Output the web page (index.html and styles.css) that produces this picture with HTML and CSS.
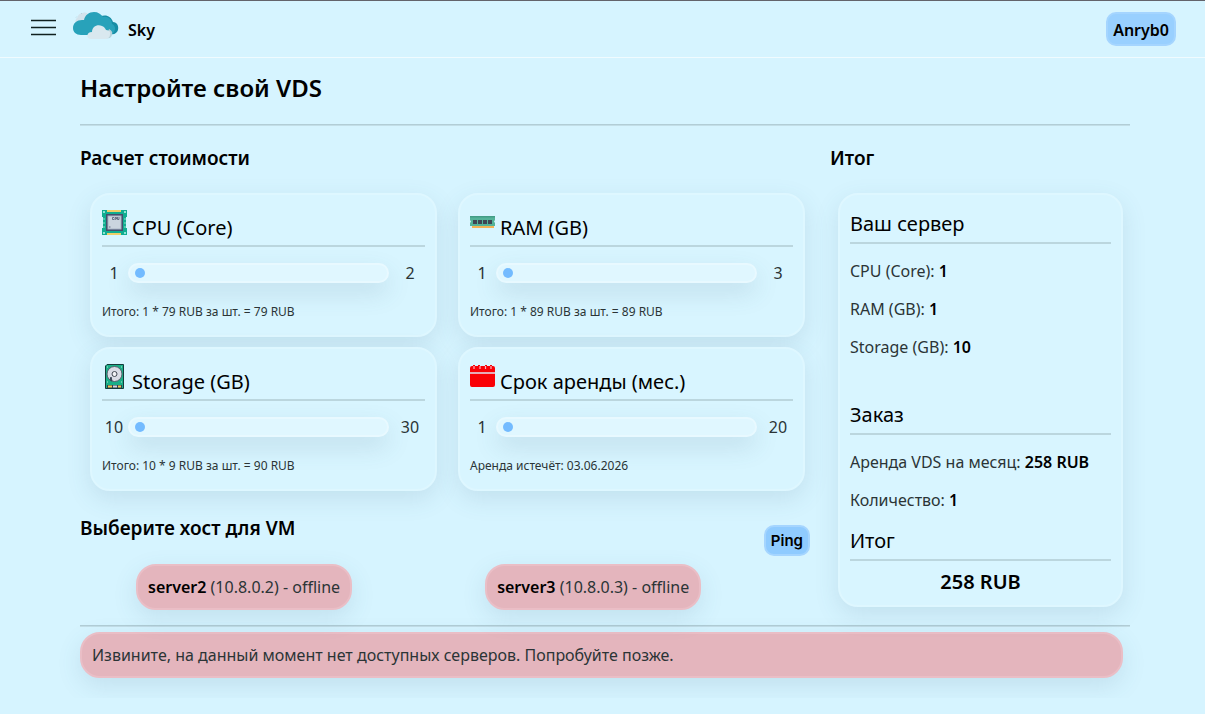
FILE: index.html
```html
<!DOCTYPE html>
<html lang="ru">
<head>
<meta charset="utf-8">
<title>Sky — VDS</title>
<link rel="stylesheet" href="styles.css">
</head>
<body>
<header class="topbar">
  <button class="menu" type="button" aria-label="Меню">
    <svg width="26" height="18" viewBox="0 0 26 18"><path d="M0 1.500h25M0 8.500h25M0 15.500h25" stroke="#10201f" stroke-width="1.3"/></svg>
  </button>
  <a class="brand" href="#">
    <svg width="46" height="28" viewBox="0 0 46 28" aria-hidden="true">
      <path d="M3 16C1 10 3 6 5 5c0-3 3-4 5-4 2-1 5 0 6 2l1 8-8 6z" fill="#d3e3ec"/>
      <path d="M3 5.500l1-1M8 2l1-1" stroke="#b7d5df"/>
      <path d="M27 5c5-3 11-1 13 5 4 0 6 4 5 8-1 3-4 5-7 4l-9-3z" fill="#178da5"/>
      <path d="M8 23c-5 0-8-3-8-7 0-5 4-8 9-8h2c1-5 5-8 10-8 4 0 7 2 9 5 5-1 9 2 9 7 3 1 4 5 2 8-1 2-3 3-5 3z" fill="#28a2ba"/>
      <path d="M33 26c4 1 6-1 6-4 1-2-1-4-3-5z" fill="#b8d0d8"/>
      <path d="M18 27c-5 0-5-7 1-7 0-5 5-8 10-6 3 1 4 4 4 4 4 0 5 3 4 5 0 2-2 4-5 4z" fill="#d9e8ef"/>
    </svg>
    <span>Sky</span>
  </a>
  <button class="btn user" type="button">Anryb0</button>
</header>
<main class="page">
  <h1>Настройте свой VDS</h1>
  <hr class="rule">
  <div class="columns">
    <section class="config">
      <h2>Расчет стоимости</h2>
      <div class="cards">
        <article class="card">
          <div class="card-title">
            <svg width="25" height="25" viewBox="0 0 25 25" aria-hidden="true">
              <path d="M0 0h25v7h-1v11h1v7H0v-7h1V7H0z" fill="#10ad91"/>
              <path d="M5 0h14v2H5zM5 23h14v2H5z" fill="#efcf68"/>
              <path d="M1 8h2v2H1zm0 4h2v2H1zm0 4h2v2H1zm21-8h2v2h-2zm0 4h2v2h-2zm0 4h2v2h-2z" fill="#49c6ac"/>
              <path d="M1 1h2v2H1zm21 0h2v2h-2zM1 22h2v2H1zm21 0h2v2h-2z" fill="#8ee3d1"/>
              <path d="M4 4h17v17H4z" fill="#454f6c"/>
              <path d="M5.500 5.500h14v14h-14z" fill="#a9b5c6"/>
              <path d="M6.500 6.500h12v12h-12z" fill="#cbd5df"/>
              <path d="M12 7.500h-1.500v2H12M13 10V7.500h1.500V9H13M15.500 7v2.500H17V7M7 17h1.500" fill="none" stroke="#4d5870" stroke-width=".8"/>
            </svg>
            <label for="cpu">CPU (Core)</label>
          </div>
          <div class="range-row"><span>1</span><input id="cpu" type="range" min="1" max="2" value="1"><span>2</span></div>
          <p class="note">Итого: 1 * 79 RUB за шт. = 79 RUB</p>
        </article>
        <article class="card">
          <div class="card-title">
            <svg width="25" height="25" viewBox="0 0 25 25" aria-hidden="true">
              <path d="M2 16h22v2H2z" fill="#f5b354"/>
              <path d="M0 6h25v4l-1 1.500 1 1.500v3H0v-3l1-1.500L0 10z" fill="#54b399"/>
              <path d="M0 6h25v1.500H0z" fill="#439d86"/>
              <path d="M3 10h4v4H3zm5 0h4v4H8zm5 0h4v4h-4zm5 0h4v4h-4z" fill="#3d4654"/>
            </svg>
            <label for="ram">RAM (GB)</label>
          </div>
          <div class="range-row"><span>1</span><input id="ram" type="range" min="1" max="3" value="1"><span>3</span></div>
          <p class="note">Итого: 1 * 89 RUB за шт. = 89 RUB</p>
        </article>
        <article class="card">
          <div class="card-title">
            <svg width="25" height="25" viewBox="0 0 25 25" aria-hidden="true">
              <path d="M5 .5h16.500v24h-18V2z" fill="#19ae87" stroke="#123c3b"/>
              <circle cx="12.500" cy="10" r="7.500" fill="#d9dce6" stroke="#53606c"/>
              <circle cx="12.500" cy="10" r="2.500" fill="#f2f3f7" stroke="#424853"/>
              <path d="M9 13l-1 3 2 1z" fill="#394555" stroke="#394555"/>
              <path d="M5 21h15v3H5z" fill="#343d4e"/>
              <path d="M6 21.500h4v2H6zm10 0h3v2h-3z" fill="#f1cf50"/><path d="M11 21.500h4v2h-4z" fill="#cfd8df"/>
              <path d="M5 3h1M19 3h1M5 18h1M19 18h1" stroke="#b6e6d2"/>
            </svg>
            <label for="storage">Storage (GB)</label>
          </div>
          <div class="range-row"><span>10</span><input id="storage" type="range" min="10" max="30" value="10"><span>30</span></div>
          <p class="note">Итого: 10 * 9 RUB за шт. = 90 RUB</p>
        </article>
        <article class="card">
          <div class="card-title">
            <svg width="25" height="25" viewBox="0 0 25 25" aria-hidden="true">
              <path d="M0 8V4q0-2 2-2h1V1h2v1h3V1h2v1h5V1h2v1h3V1h2v1h1q2 0 2 2v4zM0 10h25v11q0 2-2 2H2q-2 0-2-2z" fill="#f90006"/>
              <path d="M0 8h25v2H0z" fill="#e5aab7"/>
              <path d="M4 2v3M10 2v3M15.500 2v3M21 2v3" stroke="#f7b3bd" stroke-width="1.200"/>
            </svg>
            <label for="term">Срок аренды (мес.)</label>
          </div>
          <div class="range-row"><span>1</span><input id="term" type="range" min="1" max="20" value="1"><span>20</span></div>
          <p class="note">Аренда истечёт: 03.06.2026</p>
        </article>
      </div>
      <div class="host-head">
        <h2>Выберите хост для VM</h2>
        <button class="btn ping" type="button">Ping</button>
      </div>
      <div class="hosts">
        <div class="host"><b>server2</b> (10.8.0.2) - offline</div>
        <div class="host"><b>server3</b> (10.8.0.3) - offline</div>
      </div>
    </section>
    <aside class="summary">
      <h2>Итог</h2>
      <div class="total-card">
        <h3>Ваш сервер</h3>
        <p>CPU (Core): <b>1</b></p>
        <p>RAM (GB): <b>1</b></p>
        <p>Storage (GB): <b>10</b></p>
        <h3 class="order">Заказ</h3>
        <p>Аренда VDS на месяц: <b>258 RUB</b></p>
        <p>Количество: <b>1</b></p>
        <h3 class="sum">Итог</h3>
        <strong class="price">258 RUB</strong>
      </div>
    </aside>
  </div>
  <hr class="rule">
  <div class="alert" role="alert">Извините, на данный момент нет доступных серверов. Попробуйте позже.</div>
</main>
</body>
</html>
```
FILE: styles.css
```css
* { box-sizing: border-box; }
body {
  margin: 0;
  background: #d6f4ff;
  color: #000;
  font: 400 16px/22px "Noto Sans", sans-serif;
}
h1, h2, h3, p { margin: 0; }
b { color: #000; font-weight: 600; }

.topbar {
  display: flex;
  align-items: center;
  height: 58px;
  padding: 0 29px 0 31px;
  border-top: 1px solid #63636b;
  border-bottom: 1px solid #f0fbff;
}
.menu { display: flex; padding: 0; border: 0; background: none; margin-bottom: 2px; }
.brand {
  display: flex;
  align-items: center;
  gap: 9px;
  margin-left: 16px;
  color: #000;
  font-weight: 600;
  text-decoration: none;
}
.brand svg { margin-bottom: 6px; }
.brand span { padding-top: 2px; }
.btn {
  border: 2px solid #a5d5ff;
  border-radius: 10px;
  background: #99d0ff;
  color: #000;
  padding: 0 5px;
}
.user { margin-left: auto; height: 34px; padding-top: 2px; font: 600 16px/22px "Noto Sans", sans-serif; }

.page { padding: 14px 75px 20px 80px; }
h1 { font-size: 24px; line-height: 32px; font-weight: 600; }
.rule {
  height: 2px;
  margin: 0;
  border: 0;
  border-top: 1px solid #b2cdd6;
  border-bottom: 1px solid #c3dee7;
}
h1 + .rule { margin-top: 20px; }
h2 { font-size: 19px; line-height: 24px; font-weight: 600; }

.columns { display: grid; grid-template-columns: 7fr 3fr; padding-top: 20px; }
.cards {
  display: grid;
  grid-template-columns: 1fr 1fr;
  gap: 10px 21px;
  padding: 23px 10px 0;
}
.card, .total-card {
  border: 2px solid #def7ff;
  border-radius: 20px;
  background: #d8f5ff;
  box-shadow: 0 8px 24px rgba(60, 100, 120, .13);
}
.card { height: 144px; padding: 10px; }
.card-title {
  display: flex;
  gap: 5px;
  height: 42px;
  padding-top: 5px;
  border-bottom: 2px solid #bbd6de;
  font-size: 20px;
}
.card-title label { padding-top: 7px; }
.range-row {
  display: grid;
  grid-template-columns: 24px 1fr 30px;
  align-items: center;
  padding-top: 15px;
  text-align: center;
}
.range-row, .note, .total-card p, .host, .alert { color: #2b3436; }
.range-row input {
  appearance: none;
  width: auto;
  min-width: 0;
  height: 20px;
  margin: 0 6px 0 2px;
  padding: 0 5px;
  border: 2px solid #e8f9ff;
  border-radius: 10px;
  background: #e0f7ff;
  box-shadow: 0 10px 24px rgba(60, 100, 120, .15);
}
.range-row input::-webkit-slider-thumb {
  appearance: none;
  width: 10px;
  height: 10px;
  border-radius: 50%;
  background: #73bbff;
}
.note { padding-top: 20px; font-size: 12px; line-height: 16px; }

.host-head { display: flex; justify-content: space-between; padding: 25px 5px 0 0; }
.ping { height: 31px; margin-top: 9px; background: #8fcbff; font: 600 15px/20px Inter, sans-serif; }
.hosts { display: flex; gap: 133px; padding: 8px 0 15px 56px; }
.host, .alert {
  padding: 10px;
  border: 2px solid #eabec6;
  border-radius: 20px;
  background: #e4b5bd;
  box-shadow: 0 8px 24px rgba(60, 100, 120, .13);
}

.summary { padding-left: 15px; }
.total-card { margin: 23px 7px 0 8px; padding: 17px 10px 11px; }
h3 {
  height: 32px;
  border-bottom: 2px solid #bbd6de;
  font-size: 20px;
  line-height: 24px;
  font-weight: 400;
}
.total-card p { margin-top: 16px; }
.total-card .order { margin-top: 45px; }
.total-card .sum { margin-top: 18px; }
.price { display: block; margin-top: 9px; font-size: 20px; line-height: 24px; font-weight: 600; text-align: center; }
.alert { margin: 5px 7px 0 0; }
```
